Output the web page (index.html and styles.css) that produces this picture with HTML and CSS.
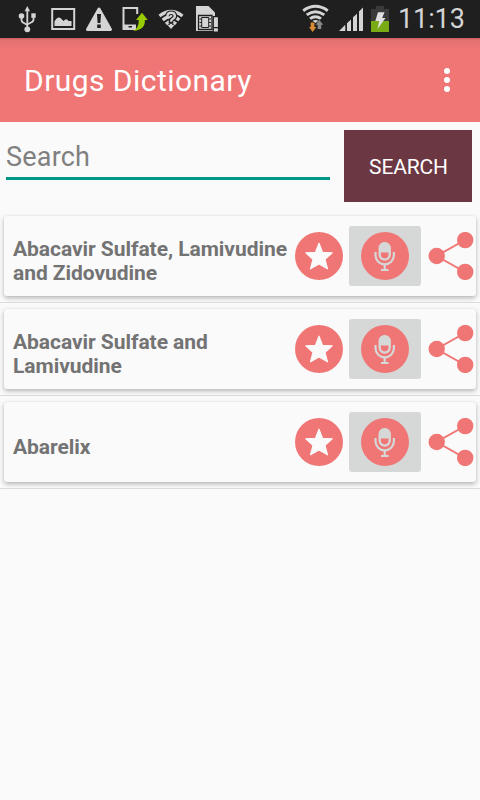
FILE: index.html
```
<!DOCTYPE html>
<html lang="en">
<head>
    <meta charset="utf-8">
    <title>Drugs Dictionary</title>
    <link rel="stylesheet" href="styles.css">
</head>
<body>
    <svg class="sprite" xmlns="http://www.w3.org/2000/svg">
        <symbol id="star" viewBox="0 0 48 48">
            <circle cx="24" cy="24" r="24" fill="#f07675"/>
            <path d="M24 11.2 27.600 20.400 37.200 20.800 30 27.400 32.500 36.800 24 32 15.500 36.800 18 27.400 10.800 20.800 20.400 20.400Z" fill="#fafafa" stroke="#fafafa" stroke-width="1.200" stroke-linejoin="round"/>
        </symbol>
        <symbol id="mic" viewBox="0 0 48 48">
            <circle cx="24" cy="24" r="24" fill="#f07675"/>
            <g fill="none" stroke="#d6d7d7">
                <rect x="18.700" y="11.200" width="10" height="16.400" rx="5" stroke-width="2.400"/>
                <path d="M14.500 20v3.300a9.200 9 0 0 0 18.400 0V20" stroke-width="2.200"/>
                <path d="M23.700 32v6M20 38h7.600" stroke-width="2.200"/>
            </g>
            <path d="M18 20.600v-4.600a5.700 5.700 0 0 1 11.400 0v4.600z" fill="#d6d7d7"/>
        </symbol>
        <symbol id="share" viewBox="0 0 46 48">
            <path d="M37 8 8.500 24 37 40" fill="none" stroke="#f07675" stroke-width="2"/>
            <g fill="#f07675">
                <circle cx="8.700" cy="24" r="8.200"/>
                <circle cx="37.200" cy="8.100" r="8.200"/>
                <circle cx="37.200" cy="39.900" r="8.200"/>
            </g>
        </symbol>
    </svg>

    <div class="status-bar">
        <div class="status-icons">
            <!-- usb -->
            <svg width="36" height="38" viewBox="0 0 36 38" fill="#d4d4d4">
                <path d="M18.300 10v19M12.500 17v3q0 2 2.500 3l3.300 2M24.500 17v2.500q0 2-2.500 3l-3.700 2" fill="none" stroke="#d4d4d4" stroke-width="1.800"/>
                <path d="M18.300 6 21 11.300h-5.400z"/>
                <circle cx="12.500" cy="16" r="2.800"/>
                <path d="M22.300 13.300h4.400v4.500h-4.400z"/>
                <circle cx="18.300" cy="29.300" r="2.900"/>
            </svg>
            <!-- picture -->
            <svg width="36" height="38" viewBox="0 0 36 38">
                <rect x="7.200" y="9" width="22" height="20" fill="none" stroke="#d4d4d4" stroke-width="2"/>
                <path d="M9.500 26v-4.500q3-5.500 6-3.500l3 3q3-3.500 5 0h3v5z" fill="#d4d4d4"/>
            </svg>
            <!-- warning -->
            <svg width="36" height="38" viewBox="0 0 36 38">
                <path d="M18 9 29.500 29.500h-23z" fill="#d4d4d4" stroke="#d4d4d4" stroke-width="3" stroke-linejoin="round"/>
                <path d="M16 14h4l-.6 9h-2.800zM16.200 24.500h3.600V28h-3.600z" fill="#1f1f1f"/>
            </svg>
            <!-- phone update -->
            <svg width="36" height="38" viewBox="0 0 36 38">
                <path d="M20.200 14V8H6.500v21h12" fill="none" stroke="#d4d4d4" stroke-width="2"/>
                <path d="M6 24.500h13V30H6z" fill="#d4d4d4"/>
                <path d="M11.500 26h3.500v1.500h-3.500z" fill="#1f1f1f"/>
                <path d="M25 12.700 30.800 20h-3q1 9.500-11.500 11 5.500-3 5.500-11H19z" fill="#99cc00"/>
            </svg>
            <!-- unknown wifi -->
            <svg width="36" height="38" viewBox="0 0 36 38">
                <g fill="none" stroke="#d4d4d4" stroke-width="3.300">
                    <path d="M6.500 16q11.500-9 23 0"/>
                    <path d="M9.700 20q8.300-7 16.600 0"/>
                    <path d="M13 24q5-4.500 10 0"/>
                </g>
                <path d="M14.500 25h7L18 29z" fill="#d4d4d4"/>
                <path d="M14.300 16q.5-3.300 3.900-3.300t3.700 3.300q0 1.700-2 2.800-1.900 1-1.900 3v2" fill="none" stroke="#1f1f1f" stroke-width="4.600"/>
                <path d="M14.300 16q.5-3.300 3.900-3.300t3.700 3.300q0 1.700-2 2.800-1.900 1-1.900 3M18 24v2.700" fill="none" stroke="#d4d4d4" stroke-width="2.400"/>
            </svg>
            <!-- sim card -->
            <svg width="36" height="38" viewBox="0 0 36 38">
                <path d="M7 6h12.500l6.500 6.500V31H7z" fill="#d4d4d4"/>
                <path d="M9.500 15.500h13.500v14H9.500z" fill="none" stroke="#1f1f1f" stroke-width="1.300"/>
                <path d="M12.700 17.500h7v10h-7zM10.500 19h2M10.500 22.500h2M10.500 26h2M20 19h2M20 22.500h2M20 26h2" fill="none" stroke="#1f1f1f"/>
                <path d="M23.700 16h6v17h-6z" fill="#1f1f1f"/>
                <path d="M24.900 17.200h4v9.800h-4zM24.900 28.300h4v3.200h-4z" fill="#d4d4d4"/>
            </svg>
        </div>
        <div class="status-right">
            <!-- wifi -->
            <svg width="36" height="38" viewBox="0 0 36 38">
                <g fill="none" stroke="#d4d4d4" stroke-width="2.900">
                    <path d="M3.200 10.700q12.300-8.700 24.600 0"/>
                    <path d="M6.700 14.900q8.800-6.500 17.600 0"/>
                    <path d="M10 18.700q5.500-4 11 0"/>
                </g>
                <path d="M12.500 20.700q3-1.500 6 0l-3 2.300z" fill="#d4d4d4"/>
                <path d="M10.700 22.500h3.700V27h2l-3.800 5L9 27h1.700z" fill="#d98a34"/>
                <path d="M19.300 20 23.300 24.700h-2V29h-3.600v-4.300h-2z" fill="#888"/>
            </svg>
            <!-- signal -->
            <svg width="32" height="38" viewBox="0 0 32 38" fill="#d4d4d4">
                <path d="M3 31l6.300-6.200V31zM11 23.200l4-3.600V31h-4zM17 17.300l4-3.600V31h-4zM23 11.400l4-3.900V31h-4z"/>
            </svg>
            <!-- battery -->
            <svg width="24" height="38" viewBox="0 0 24 38">
                <path d="M8 6h8v3h5v23H3V9h5z" fill="#3a3a3a"/>
                <path d="M3 21h18v11H3z" fill="#7aab16"/>
                <path d="M10 12.300h6.500l-2.300 5.700h3.300L9.500 29l1.700-8H7.300z" fill="#e0e0e0"/>
            </svg>
            <span class="clock">11:13</span>
        </div>
    </div>

    <header class="app-bar">
        <h1>Drugs Dictionary</h1>
        <svg width="6" height="24" viewBox="0 0 6 24" fill="#fff">
            <circle cx="3" cy="3" r="3"/>
            <circle cx="3" cy="12" r="3"/>
            <circle cx="3" cy="21" r="3"/>
        </svg>
    </header>

    <form class="search">
        <input type="text" class="search-input" name="search" placeholder="Search">
        <button type="button" class="search-button">SEARCH</button>
    </form>

    <ul class="drug-list">
        <li>
            <div class="card">
                <p class="name">Abacavir Sulfate, Lamivudine and Zidovudine</p>
                <svg class="star"><use href="#star"/></svg>
                <div class="mic-button"><svg><use href="#mic"/></svg></div>
                <svg class="share"><use href="#share"/></svg>
            </div>
        </li>
        <li>
            <div class="card">
                <p class="name">Abacavir Sulfate and Lamivudine</p>
                <svg class="star"><use href="#star"/></svg>
                <div class="mic-button"><svg><use href="#mic"/></svg></div>
                <svg class="share"><use href="#share"/></svg>
            </div>
        </li>
        <li>
            <div class="card">
                <p class="name">Abarelix</p>
                <svg class="star"><use href="#star"/></svg>
                <div class="mic-button"><svg><use href="#mic"/></svg></div>
                <svg class="share"><use href="#share"/></svg>
            </div>
        </li>
    </ul>
</body>
</html>
```
FILE: styles.css
```
* {
    box-sizing: border-box;
}

body {
    margin: 0;
    height: 800px;
    overflow: hidden;
    background-color: #fafafa;
    font-family: Roboto, sans-serif;
}

svg {
    display: block;
    flex: none;
}

.sprite {
    display: none;
}

.status-bar {
    display: flex;
    justify-content: space-between;
    height: 38px;
    padding: 0 15px 0 9px;
    background-color: #1f1f1f;
}

.status-icons,
.status-right {
    display: flex;
}

.clock {
    width: 73px;
    padding-left: 6px;
    font-size: 27px;
    line-height: 38px;
    letter-spacing: -0.1px;
    white-space: nowrap;
    color: #d4d4d4;
}

.app-bar {
    display: flex;
    align-items: center;
    justify-content: space-between;
    height: 84px;
    padding: 0 30px 0 24px;
    background: linear-gradient(#c95f5e, #e47070 2px, #f07675 12px);
    color: #fff;
}

.app-bar h1 {
    margin: 0;
    padding-top: 2px;
    font-size: 30px;
    font-weight: 400;
    line-height: 36px;
    letter-spacing: 0.45px;
}

.search {
    display: flex;
    align-items: flex-start;
    justify-content: space-between;
    height: 88px;
    padding: 8px 8px 0 6px;
}

.search-input {
    width: 324px;
    height: 50px;
    padding: 6px 0 0;
    border: 0;
    border-bottom: 3px solid #009688;
    background: none;
    font-family: inherit;
    font-size: 27px;
    letter-spacing: 0.2px;
    outline: none;
}

.search-input::placeholder {
    color: #808080;
}

.search-button {
    width: 128px;
    height: 72px;
    padding: 2px 0 0 1px;
    border: 0;
    background-color: #6a3742;
    color: #fff;
    font-family: inherit;
    font-size: 21px;
    letter-spacing: -0.15px;
}

.drug-list {
    margin: 0;
    padding: 0;
    list-style: none;
}

.drug-list li {
    height: 93px;
    padding: 6px 4px;
    border-bottom: 1px solid #dcdcdc;
}

.card {
    display: flex;
    align-items: center;
    height: 80px;
    padding-left: 9px;
    border-radius: 3px;
    background-color: #fafafa;
    box-shadow: 0 2px 5px rgba(0, 0, 0, 0.28), 0 0 2px rgba(0, 0, 0, 0.06);
}

.name {
    width: 282px;
    margin: 0;
    padding-top: 9px;
    font-size: 21px;
    font-weight: 700;
    line-height: 24px;
    letter-spacing: -0.05px;
    color: #737373;
}

.star {
    width: 48px;
    height: 48px;
}

.mic-button {
    display: flex;
    align-items: center;
    justify-content: center;
    width: 72px;
    height: 60px;
    margin: 0 7px 0 6px;
    border-radius: 3px;
    background-color: #d6d7d7;
}

.mic-button svg {
    width: 48px;
    height: 48px;
}

.share {
    width: 46px;
    height: 48px;
}
```
